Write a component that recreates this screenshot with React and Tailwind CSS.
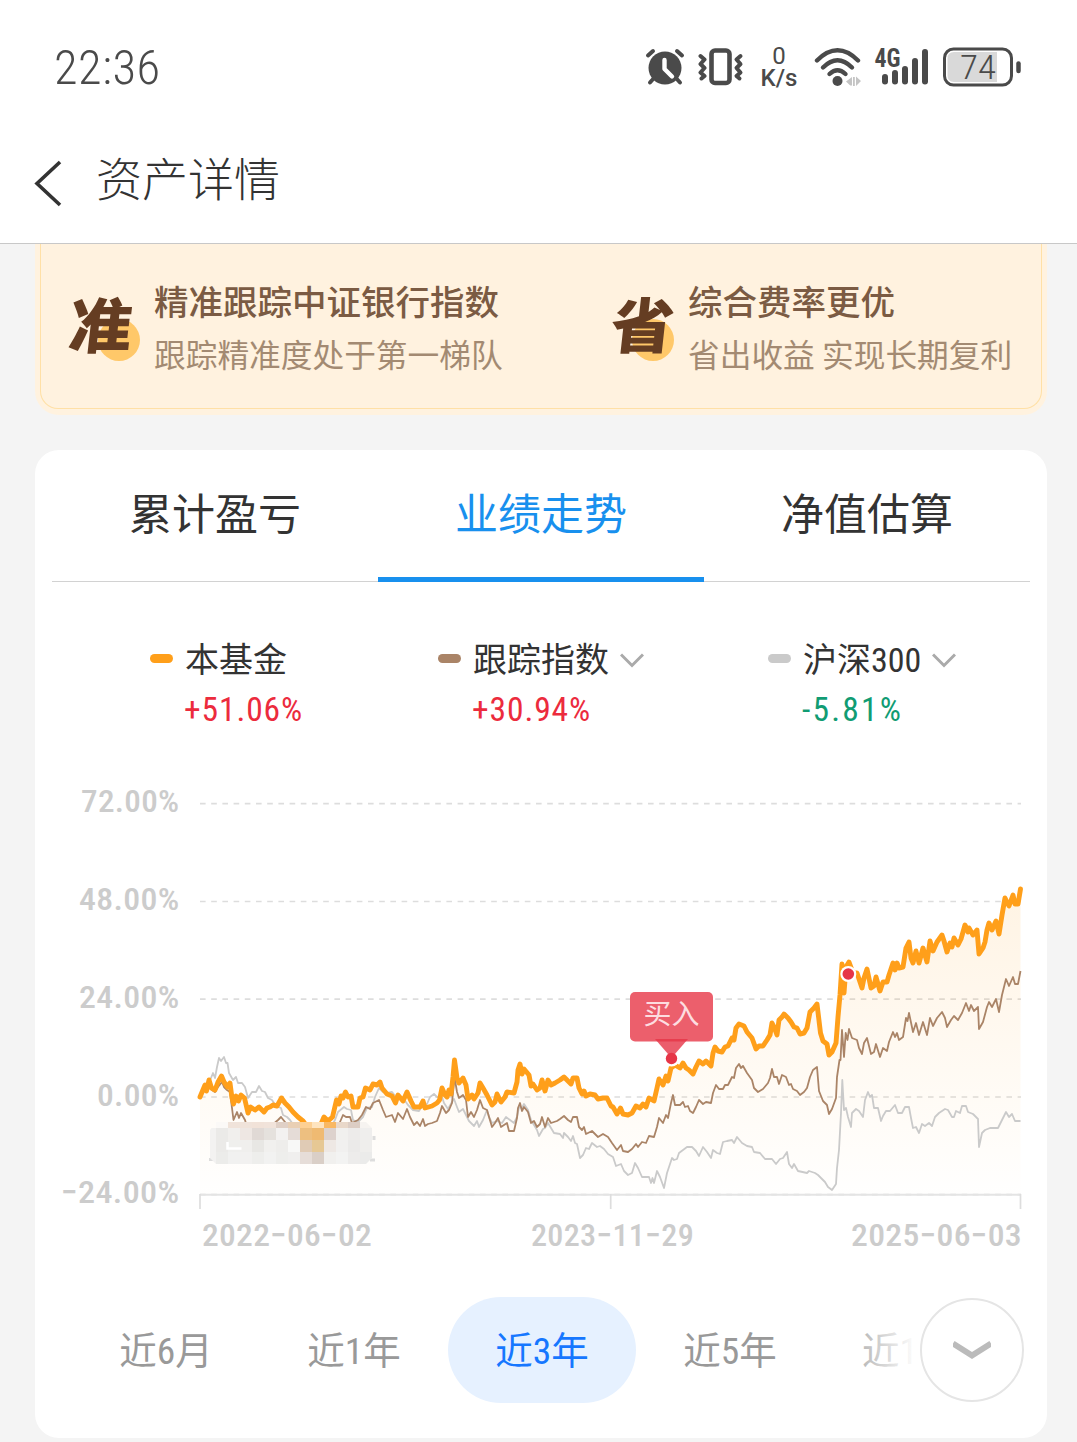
import { useState } from "react";
import clsx from "clsx";

const fundPoints =
  "200,1097 202.5,1091 205,1085 206.5,1091 209,1080 211.5,1088 215,1090 218,1082 221.5,1076 224,1082 227.5,1087 230,1083 232,1098 233.5,1104 236,1096 238.5,1101 241,1095 244.5,1098 248,1113 250.5,1107 255,1110 259,1107 264,1112 267,1108 270,1107 273,1105 277,1106 281.5,1098 285,1103 289,1107 293,1112 298,1117 303,1121 308,1128 318,1131 324,1117 328,1121 332.5,1117 336.5,1100 339,1104 341,1096 343,1098 345.5,1092 348,1097 351,1096 353,1107 358,1107 360,1098 363,1097 365.5,1088 370,1090 373,1084 377,1085 380,1082 382,1088 387,1094 392,1096 395.5,1103 398,1095 403,1101 407,1092 411,1101 414,1107 420,1107 423,1101 425,1108 432,1106 437,1103 439.5,1100 442,1088 445,1095 447,1097 449,1090 451,1094 453,1077 454.5,1060 457,1078 459,1083 463,1078 466,1085 468,1099 472,1095 474,1099 478,1093 480,1083 483,1088 487,1095 492,1105 495,1102 497,1094 501,1102 505,1097 507,1092 514,1093 517,1082 518,1070 520,1064 522,1074 524,1069 529,1075 531,1086 533,1084 537,1090 540,1088 542,1080 545,1091 548,1080 551,1085 555,1083 560,1080 564,1077 568,1081 571,1084 573,1078 577,1078 579,1088 582,1094 584,1091 586,1096 590,1094 595,1095 598,1099 603,1098 607,1098 611,1106 613,1107 617,1114 620.5,1108 623,1114 628,1115 632,1113 636,1106 640,1108 643,1104 646,1107 649,1098 654,1101 657,1088 659,1079 663,1085 666,1076 668,1081 671,1068 675,1065 680,1068 683,1063 686,1068 689,1070 693,1074 696,1067 699,1061 703,1064 706,1061 711,1066 713,1053 715,1047 718,1051 722,1052 725,1047 728,1046 732,1038 734,1040 736,1028 739,1024 744,1026 747,1032 752,1038 756,1049 759,1046 763,1046 767,1040 770,1035 772,1023 774,1027 777,1035 779,1020 782,1017 784,1014 788,1018 791,1022 794,1027 797,1028 800,1034 804,1033 807,1028 810,1012 814,1008 817,1004 820.5,1033 823,1041 827,1044 829,1055 832,1052 836,1043 838,1017 840,995 842,964 844,993 846,967 849,962 853,973 857,973 862,988 864,978 867,969 871,988 874,986 876,977 880,991 883,982 887,982 889,975 893,963 895,970 897,963 899,968 903,967 906,948 909,942 911,958 913,963 916,951 919,963 923,948 927,962 930,941 933,951 937,942 942,935 944,941 947,952 950,943 952,947 954,938 958,945 961,939 965,925 968,932 969,928 973,935 977,930 979,954 983,948 985,942 987,930 989,923 992,930 996,921 999,934 1002,915 1005,898 1009,906 1013,895 1015,904 1018,904 1020.5,889";

const indexPoints =
  "200,1097 205,1086 209,1083 212,1090 215,1092 218,1087 222,1082 224,1087 227,1090 230,1092 232,1108 233.5,1120 237,1112 239,1118 241,1113 245,1120 247,1127 258,1128 270,1127 278,1120 281,1117 285,1122 290,1130 315,1150 340,1122 343,1115 346,1117 350,1117 352,1123 358,1120 362,1115 366,1107 370,1109 373,1103 379,1100 383,1110 386,1117 392,1115 395,1122 398,1113 403,1119 407,1109 410,1117 414,1125 417,1122 420,1126 423,1119 425,1126 428,1124 432,1123 437,1121 440,1113 442,1106 446,1113 449,1110 452,1103 454.5,1077 457,1092 459,1098 463,1095 466,1100 468,1117 471,1112 474,1117 477,1110 480,1100 483,1108 487,1110 492,1127 495,1123 498,1118 501,1127 507,1123 509,1131 514,1131 517,1118 518,1108 520,1103 522,1111 524,1107 528,1112 531,1123 534,1121 537,1127 540,1124 542,1117 545,1127 548,1118 551,1123 557,1121 560,1119 564,1116 568,1120 571,1122 573,1117 577,1117 579,1127 582,1130 584,1127 586,1134 592,1131 598,1137 603,1134 608,1137 612,1143 617,1150 621,1145 623,1151 628,1152 632,1149 636,1144 638,1147 642,1142 646,1143 649,1136 654,1137 657,1127 659,1118 663,1123 666,1115 668,1118 671,1103 673,1095 675,1105 680,1105 683,1102 685,1107 688,1106 690,1111 693,1113 696,1107 699,1100 703,1104 706,1102 711,1103 713,1093 716,1085 719,1089 723,1089 725,1085 728,1085 732,1077 734,1078 736,1068 739,1064 741,1068 743,1066 747,1073 752,1080 754,1088 758,1092 763,1089 768,1083 770,1078 772,1069 774,1077 777,1077 779,1084 782,1075 786,1077 789,1085 791,1084 793,1089 797,1091 800,1095 804,1092 807,1088 810,1077 813,1070 817,1067 819,1091 823,1101 827,1105 829,1114 832,1109 836,1098 837,1077 839.5,1060 840.5,1060 842,1030 844,1057 845.7,1033 847.5,1040 849,1029 852,1038 857,1040 859,1048 862,1054 864,1043 867,1038 871,1054 874,1052 876,1044 880,1057 883,1048 887,1051 889,1042 893,1032 895,1037 897,1033 899,1040 903,1037 906,1018 907.5,1021 909,1013 913,1032 916,1023 919,1035 923,1022 927,1035 930,1018 933,1026 937,1018 942,1012 945,1018 947,1027 951,1020 954,1016 958,1020 962,1013 966,1003 969,1011 971,1005 974,1011 978,1007 979,1029 983,1022 987,1007 989,1002 992,1007 996,999 999,1012 1002,995 1006,979 1009,986 1013,977 1015,984 1018,984 1020.5,971";

const csiPoints =
  "200,1097 205,1087 209,1083 213,1073 215,1078 217,1067 219,1058 221,1061 224,1057 226,1063 227.5,1063 229,1073 233,1080 236,1077 238,1083 242,1083 245,1087 248,1098 252,1092 256,1092 259,1086 262,1091 265,1092 268,1098 272,1100 276,1106 281,1108 283,1115 287,1117 290,1120 295,1127 318,1150 335,1120 338,1112 344,1107 347,1109 351,1110 353,1120 358,1122 363,1117 367,1108 372,1107 375,1097 379,1088 383,1092 387,1093 392,1092 397,1098 403,1098 408,1105 413,1110 419,1111 422,1106 427,1104 430,1097 434,1094 437,1097 442,1097 444,1103 448,1109 452,1102 454,1099 457,1107 459,1112 463,1109 466,1115 469,1121 474,1126 477,1121 479,1127 483,1120 487,1110 489,1117 492,1123 497,1121 502,1123 506,1117 510,1120 514,1123 517,1117 519,1107 522,1108 524,1104 528,1110 531,1120 534,1125 537,1130 539,1136 543,1129 545,1128 548,1123 551,1128 554,1133 560,1134 563,1138 564,1133 568,1137 571,1141 573,1136 575,1143 577,1144 580,1158 583,1155 586,1148 589,1149 592,1143 597,1147 600,1146 604,1149 608,1154 613,1157 616,1166 621,1164 624,1171 628,1175 632,1173 635,1163 638,1168 642,1177 649,1177 651,1183 652.5,1178 654,1183 657,1171 660,1177 664,1188 667,1173 672,1158 674,1160 677,1159 679,1153 683,1150 687,1147 692,1147 696,1151 699,1156 703,1147 707,1152 711,1158 713,1150 717,1153 720,1154 723,1142 727,1141 732,1140 734,1143 737,1137 742,1143 747,1146 752,1147 754,1152 760,1153 765,1159 772,1159 776,1164 780,1159 783,1158 787,1152 789,1164 792,1168 794,1164 798,1171 807,1173 809,1171 815,1173 818,1175 821,1178 825,1182 828,1187 832,1190 836,1184 837,1168 839,1150 841,1113 842.3,1080 844,1110 846,1108 848,1117 851,1127 852,1113 856,1109 859,1111 863,1117 865,1100 868,1092 870,1097 872,1095 874,1108 878,1108 881,1121 883,1116 886,1111 890,1111 895,1105 898,1113 902,1113 905,1107 909,1107 911,1118 913,1128 916,1127 919,1133 922,1124 925,1126 929,1123 932,1126 935,1117 939,1113 945,1109 948,1110 952,1117 954,1117 956,1111 960,1113 962,1106 966,1106 968,1112 973,1114 978,1119 979,1147 982,1133 985,1130 990,1128 998,1128 1002,1120 1006,1112 1009,1117 1012,1114 1015,1121 1020.5,1121";

const yTicks = [
  { label: "72.00%", y: 803.7, x: 81 },
  { label: "48.00%", y: 901.5, x: 79 },
  { label: "24.00%", y: 999.2, x: 79 },
  { label: "0.00%", y: 1097, x: 97 },
  { label: "−24.00%", y: 1194.7, x: 61 },
];

const xTicks = [
  { label: "2022−06−02", tick: 200, x: 202, w: 170 },
  { label: "2023−11−29", tick: 610.7, x: 531, w: 163 },
  { label: "2025−06−03", tick: 1020.5, x: 851, w: 171 },
];

// Pixelated patch that hides part of the lines, 12px cells
const mosaic = [
  ["#fbf9f7", "#f0e3da", "#f0e3da", "#f1e2d8", "#f1e3da", "#e0d0c6", "#e9cfb4", "#fdd093", "#fee4bf", "#f9b863", "#e9d8c9", "#dccdc4", "#f6f3f0"],
  ["#ebeae8", "#f1efed", "#eee7e3", "#e0d9d5", "#e5e1dd", "#f3f1f0", "#e5dcd7", "#edbf80", "#efba72", "#ddd2cd", "#f1f0ee", "#edebea", "#efeeed"],
  ["#ebeae8", "#efefed", "#f0efed", "#e8e7e4", "#f1f0ee", "#eeedeb", "#f8f8f7", "#e0cbb5", "#e6c894", "#eee8e4", "#f1f0ef", "#ebeae9", "#efeeec"],
  ["#ececea", "#f1f1f0", "#f2f1f0", "#eeeeec", "#f2f2f1", "#eeeeec", "#f0efee", "#e6ddd8", "#dacfc7", "#f1f0ee", "#f3f3f2", "#edeceb", "#ebebea"],
];

const tabs = ["累计盈亏", "业绩走势", "净值估算"];
const periods = ["近6月", "近1年", "近3年", "近5年", "近10年"];

const perks = [
  { icon: "准", title: "精准跟踪中证银行指数", desc: "跟踪精准度处于第一梯队" },
  { icon: "省", title: "综合费率更优", desc: "省出收益 实现长期复利" },
];

export default function App() {
  return (
    <div className="flex h-[1442px] w-[1077px] flex-col overflow-hidden bg-[#f4f4f4] font-[Roboto,'Noto_Sans_CJK_SC',sans-serif] text-[#333] font-stretch-semi-condensed">
      <header className="h-[244px] shrink-0 border-b border-[#c8c8c8] bg-white">
        <StatusBar />
        <div className="flex items-center pt-[10px] pl-[33px]">
          <svg width="30" height="48" viewBox="0 0 30 48" fill="none" className="mt-[5px]">
            <path d="M27 3 4 24.500 27 46" stroke="#333" strokeWidth="3.6" />
          </svg>
          <h1 className="ml-[33px] text-[46px] leading-[72px] font-light">资产详情</h1>
        </div>
      </header>

      <PerksBanner />

      <main className="mx-[35px] mt-[35px] mr-[30px] h-[988px] shrink-0 rounded-[24px] bg-white">
        <Tabs />
        <Legend />
        <TrendChart />
        <PeriodPicker />
      </main>
    </div>
  );
}

function StatusBar() {
  return (
    <div className="flex h-[134px] items-center justify-between pr-[56px] pl-[54px] text-[#4a4a4a]">
      <span className="mt-[2px] text-[48.500px] leading-none font-light tracking-[0.5px]">22:36</span>
      <div className="flex items-center">
        {/* Alarm */}
        <svg width="40" height="40" viewBox="0 0 40 40" fill="none" stroke="#4a4a4a" strokeLinecap="round">
          <circle cx="20" cy="21" r="16.500" fill="#4a4a4a" stroke="none" />
          <path d="M3 8.500 8 4M37 8.500 32 4" strokeWidth="4" />
          <path d="M9 31 5 35.500M31 31l4 4.500" strokeWidth="4" />
          <path d="M19.500 13v9l7.500 7.500" stroke="#fff" strokeWidth="4.400" strokeLinejoin="round" />
        </svg>
        {/* Vibrate */}
        <svg width="46" height="40" viewBox="0 0 46 40" fill="none" stroke="#4a4a4a" strokeLinecap="round" strokeLinejoin="round" className="ml-[13px]">
          <rect x="13.500" y="3.500" width="18" height="32.500" rx="3.500" strokeWidth="4.600" />
          <path d="M2.500 9 6.500 12.500 2.500 17 6.500 21 2.500 25.500 6.500 29 3.500 31.500" strokeWidth="4" />
          <path d="M42.500 9 38.500 12.500 42.500 17 38.500 21 42.500 25.500 38.500 29 41.500 31.500" strokeWidth="4" />
        </svg>
        <div className="ml-[16px] flex w-[38px] flex-col items-center text-[24px] leading-[22px] font-stretch-normal">
          <span>0</span>
          <span className="font-medium">K/s</span>
        </div>
        {/* Wifi */}
        <svg width="48" height="40" viewBox="0 0 48 40" fill="none" stroke="#4a4a4a" strokeLinecap="round" className="ml-[16px]">
          <path d="M3 13.500Q23.500-7 44 13.500" strokeWidth="4.400" />
          <path d="M9 20.500Q23.500 6 38 20.500" strokeWidth="4.400" />
          <path d="M15.500 27Q23.500 19.500 31.500 27" strokeWidth="4.400" />
          <circle cx="23.500" cy="34" r="5" fill="#4a4a4a" stroke="none" />
          <path d="M38 30v8.500h-1.800L32 34.500ZM42 29.500v9.500l5-5ZM39 30h1.800v9h-1.800Z" fill="#c4c4c4" stroke="none" />
        </svg>
        {/* Signal */}
        <svg width="56" height="40" viewBox="0 0 56 40" fill="none" stroke="#4a4a4a" strokeLinecap="round" strokeWidth="6" className="ml-[12px] overflow-visible">
          <text x="0.500" y="20" textLength="26" lengthAdjust="spacingAndGlyphs" fontSize="25.500" fontWeight="700" fill="#4a4a4a" stroke="none">
            4G
          </text>
          <path d="M11 30v4.500M21 26v8.500M31 22v12.500M41 14v20.500M51 5v29.500" />
        </svg>
        {/* Battery */}
        <svg width="78" height="40" viewBox="0 0 78 40" fill="none" className="ml-[13px]">
          <rect x="1.500" y="2" width="67" height="36" rx="9" stroke="#4a4a4a" strokeWidth="3" />
          <path d="M11 5H54V35H11Q4.500 35 4.500 28.500V11.500Q4.500 5 11 5Z" fill="#d9d9d9" />
          <text x="17" y="32" textLength="36" lengthAdjust="spacingAndGlyphs" fontSize="34" fontWeight="300" fill="#4a4a4a">
            74
          </text>
          <path d="M75.500 16.500v7.500" stroke="#4a4a4a" strokeWidth="4.500" strokeLinecap="round" />
        </svg>
      </div>
    </div>
  );
}

function PerksBanner() {
  return (
    <section className="mr-[30px] ml-[35px] h-[171px] shrink-0 rounded-b-[24px] bg-[#fff2df] px-[5px] pb-[6px]">
      <div className="flex h-full rounded-b-[18px] border border-t-0 border-[#ffe0a6] pt-[36px] pl-[28px]">
        {perks.map((perk, i) => (
          <div key={perk.icon} className={clsx("flex shrink-0", i === 0 ? "w-[542px]" : "w-[410px]")}>
            <div className={clsx("relative h-[84px] shrink-0", i === 0 ? "w-[76px]" : "w-[68px]")}>
              <span className="absolute top-[39px] right-[5px] size-[42px] rounded-full bg-[#ffc869]" />
              <span className="absolute top-[16px] left-0 inline-block -skew-x-6 scale-y-95 text-[63px] leading-[63px] font-black text-[#653d22]">
                {perk.icon}
              </span>
            </div>
            <div className="ml-[9px] whitespace-nowrap">
              <p className="text-[34.500px] leading-[46px] font-medium text-[#7b5b43]">{perk.title}</p>
              <p className="mt-[9px] text-[31.700px] leading-[44px] text-[#a38a72]">{perk.desc}</p>
            </div>
          </div>
        ))}
      </div>
    </section>
  );
}

function Tabs() {
  const [active, setActive] = useState(1);

  return (
    <nav className="mx-[17px] flex h-[132px] border-b border-[#d2d2d2]">
      {tabs.map((tab, i) => (
        <button
          key={tab}
          onClick={() => setActive(i)}
          className={clsx(
            "-mb-px h-[132px] flex-1 border-b-[5px] pt-[3px] text-[43px] leading-[60px] font-normal",
            active === i ? "border-[#1890ee] text-[#1890ee]" : "border-transparent text-[#333]"
          )}
        >
          {tab}
        </button>
      ))}
    </nav>
  );
}

function Legend() {
  return (
    <div className="flex h-[188px] pt-[54px] pl-[115px]">
      <LegendItem color="bg-[#ff9f1a]" name="本基金" value="+51.06%" className="w-[288px]" />
      <LegendItem color="bg-[#aa8467]" name="跟踪指数" value="+30.94%" className="w-[330px]" dropdown />
      <LegendItem color="bg-[#cacaca]" name="沪深300" value="-5.81%" className="w-[240px]" dropdown down />
    </div>
  );
}

function LegendItem({ color, name, value, className, dropdown, down }) {
  return (
    <div className={className}>
      <div className="flex items-center">
        <span className={clsx("-mt-[3px] h-[9px] w-[23px] rounded-full", color)} />
        <span className="ml-[12px] text-[34px] leading-[48px]">{name}</span>
        {dropdown && (
          <svg width="24" height="16" viewBox="0 0 24 16" fill="none" className="ml-[11px]">
            <path d="M1 2.500 12 13.500 23 2.500" stroke="#aaa" strokeWidth="3" />
          </svg>
        )}
      </div>
      <p
        className={clsx(
          "ml-[34px] pt-[1px] text-[33.500px] leading-[50px]",
          down ? "tracking-[2.2px] text-[#119c73]" : "tracking-[0.9px] text-[#ec2b3d]"
        )}
      >
        {value}
      </p>
    </div>
  );
}

function TrendChart() {
  return (
    <svg width="1012" height="490" viewBox="35 770 1012 490" fill="none" className="block">
      <defs>
        <linearGradient id="fundArea" x1="0" y1="889" x2="0" y2="1195" gradientUnits="userSpaceOnUse">
          <stop offset="0" stopColor="#ff9f1a" stopOpacity="0.120" />
          <stop offset="1" stopColor="#ff9f1a" stopOpacity="0.005" />
        </linearGradient>
        <clipPath id="mosaicClip">
          <path d="M216 1122H366L372 1128V1158L366 1164H216L210 1158V1130L216 1122Z" />
        </clipPath>
      </defs>

      {yTicks.map((t) => (
        <g key={t.label}>
          <text x={t.x} y={t.y + 8.500} textLength={179.500 - t.x} lengthAdjust="spacingAndGlyphs" letterSpacing="0.300" fontSize="32" fontWeight="500" fill="#ccc">
            {t.label}
          </text>
          <path d={`M200 ${t.y}H1021`} stroke="#ddd" strokeWidth="1.700" strokeDasharray="5.600 5.600" />
        </g>
      ))}
      <path d="M200 1194.700H1021" stroke="#e4e4e4" strokeWidth="2" />
      {xTicks.map((t) => (
        <g key={t.label}>
          <path d={`M${t.tick} 1194V1209`} stroke="#ddd" strokeWidth="1.700" />
          <text x={t.x} y="1246" textLength={t.w} lengthAdjust="spacingAndGlyphs" letterSpacing="0.300" fontSize="32" fontWeight="500" fill="#ccc">
            {t.label}
          </text>
        </g>
      ))}

      <polygon points={`${fundPoints} 1020.500,1194 200,1194`} fill="url(#fundArea)" />
      <polyline points={csiPoints} stroke="#cacaca" strokeWidth="1.800" strokeLinejoin="round" />
      <polyline points={indexPoints} stroke="#aa8467" strokeWidth="1.800" strokeLinejoin="round" />
      <polyline points={fundPoints} stroke="#ff9f1a" strokeWidth="4.900" strokeLinejoin="round" strokeLinecap="round" />

      <path d="M209 1159.500h5M370 1160h5M374 1136v4" stroke="#ddd" strokeWidth="3" />
      <g clipPath="url(#mosaicClip)" shapeRendering="crispEdges">
        <rect x="210" y="1128" width="6" height="36" fill="#f3f2f1" />
        {mosaic.map((row, r) =>
          row.map((fill, c) => (
            <rect
              key={`${r}-${c}`}
              x={216 + c * 12}
              y={r === 0 ? 1122 : 1116 + r * 12}
              width="12"
              height={r === 0 ? 6 : 12}
              fill={fill}
            />
          ))
        )}
      </g>
      <path d="M227.500 1142v6.500h14" stroke="#fff" strokeWidth="2.500" />

      {/* Buy markers */}
      <circle cx="671.500" cy="1058.500" r="8" fill="#fff" />
      <rect x="630" y="992" width="83" height="49.500" rx="5" fill="#ec5f6c" />
      <path d="M655 1039H688L671.500 1058Z" fill="#e63547" fillOpacity="0.800" />
      <circle cx="671.500" cy="1058.500" r="5.700" fill="#e63547" />
      <text x="643.500" y="1024" fontSize="28" fill="#fddde0">
        买入
      </text>
      <circle cx="848.300" cy="974" r="8" fill="#fff" />
      <circle cx="848.300" cy="974" r="5.800" fill="#e63547" />
    </svg>
  );
}

function PeriodPicker() {
  const [selected, setSelected] = useState("近3年");

  return (
    <div className="relative mt-[37px] h-[106px] overflow-hidden pl-[37px]">
      <div className="flex">
        {periods.map((p) => (
          <button
            key={p}
            onClick={() => setSelected(p)}
            className={clsx(
              "h-[106px] w-[188px] shrink-0 rounded-full pt-[2px] text-[37.500px]",
              selected === p ? "bg-[#e6f1ff] text-[#1677ff]" : "text-[#999]"
            )}
          >
            {p}
          </button>
        ))}
      </div>
      <div className="absolute top-0 right-0 flex h-[106px] w-[187px] items-center justify-end bg-linear-to-r from-white/30 via-white via-30% to-white pr-[23px]">
        <div className="flex size-[104px] items-center justify-center rounded-full border-2 border-[#e5e5e5] bg-white">
          <svg width="38" height="20" viewBox="0 0 38 20" fill="none">
            <path d="M0 3.500 19 15.500 38 3.500" stroke="#bbb" strokeWidth="6" />
          </svg>
        </div>
      </div>
    </div>
  );
}
